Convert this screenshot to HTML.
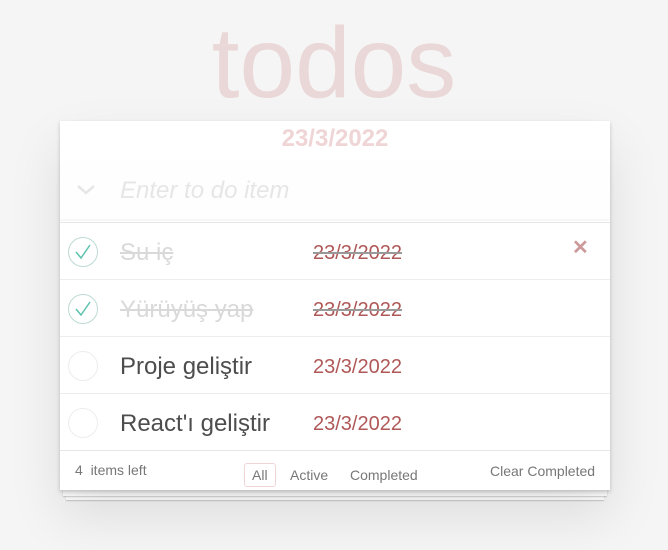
<!DOCTYPE html>
<html><head><meta charset="utf-8"><style>
*{margin:0;padding:0;box-sizing:border-box}
body{width:668px;height:550px;background:#f5f5f5;font-family:"Liberation Sans",Helvetica,Arial,sans-serif;position:relative;overflow:hidden;color:#4d4d4d}
h1{position:absolute;top:8px;left:0;width:668px;text-align:center;font-size:100px;font-weight:100;color:rgba(175,47,47,0.15);line-height:110px}
.card{position:absolute;left:60px;top:121px;width:550px;height:369px;background:#fff;box-shadow:0 2px 4px rgba(0,0,0,.2),0 25px 50px rgba(0,0,0,.1)}
.s1{position:absolute;left:63px;top:488px;width:544px;height:8px;background:#fff;box-shadow:0 1px 1px rgba(0,0,0,.2)}
.s2{position:absolute;left:66px;top:492px;width:538px;height:8px;background:#fff;box-shadow:0 1px 1px rgba(0,0,0,.2)}
.hd{position:absolute;left:0;top:4px;width:550px;text-align:center;font-size:24px;font-weight:bold;color:#efd5d5}
.inp{position:absolute;left:0;top:40px;width:550px;height:60px;background:rgba(0,0,0,0.003);box-shadow:inset 0 -2px 1px rgba(0,0,0,.03)}
.inp span{position:absolute;left:60px;top:16px;font-size:24px;font-style:italic;color:#e6e6e6}
.chev{position:absolute;left:16px;top:63px}
.row{position:absolute;left:0;width:550px;height:57px;border-top:1px solid #ededed}
.row .c{position:absolute;left:8px;top:14px;width:30px;height:30px;border:1px solid #ededed;border-radius:50%}
.row .c.d{border-color:#bddad5}
.row .t{position:absolute;left:60px;top:16px;font-size:24px;color:#4d4d4d}
.row .t.d{color:#d9d9d9;text-decoration:line-through}
.row .dt{position:absolute;left:253px;top:19px;font-size:20px;color:#b05858}
.row .dt.d{text-decoration:line-through;text-decoration-color:#999}
.x{position:absolute;left:512px;top:12px;font-size:20px;font-weight:bold;color:#cc9a9a}
.ft{position:absolute;left:0;top:329px;width:550px;height:40px;border-top:1px solid #e6e6e6;font-size:14px;color:#777}
</style></head><body>
<h1>todos</h1>
<div class="s2"></div><div class="s1"></div>
<div class="card">
<div class="hd">23/3/2022</div>
<div class="inp"><span>Enter to do item</span></div>
<svg class="chev" width="20" height="12" viewBox="0 0 20 12"><path d="M2 2 L10 9 L18 2" fill="none" stroke="#e6e6e6" stroke-width="2.5"/></svg>
<div class="row" style="top:101px;border-top:1px solid #e6e6e6">
<div class="c d"><svg width="30" height="30" viewBox="0 0 30 30" style="position:absolute;left:-1px;top:-1px"><path d="M8 15 L13 21 L22 8" fill="none" stroke="#5dc2af" stroke-width="1.5"/></svg></div>
<div class="t d">Su iç</div><div class="dt d">23/3/2022</div><div class="x">✕</div></div>
<div class="row" style="top:158px">
<div class="c d"><svg width="30" height="30" viewBox="0 0 30 30" style="position:absolute;left:-1px;top:-1px"><path d="M8 15 L13 21 L22 8" fill="none" stroke="#5dc2af" stroke-width="1.5"/></svg></div>
<div class="t d">Yürüyüş yap</div><div class="dt d">23/3/2022</div></div>
<div class="row" style="top:215px"><div class="c"></div><div class="t">Proje geliştir</div><div class="dt">23/3/2022</div></div>
<div class="row" style="top:272px"><div class="c"></div><div class="t">React'ı geliştir</div><div class="dt">23/3/2022</div></div>
<div class="ft">
<span style="position:absolute;left:15px;top:11px;font-size:14px">4 &nbsp;items left</span>
<span style="position:absolute;left:184px;top:12px;border:1px solid rgba(175,47,47,.2);border-radius:3px;padding:3px 7px">All</span>
<span style="position:absolute;left:230px;top:16px">Active</span>
<span style="position:absolute;left:290px;top:16px">Completed</span>
<span style="position:absolute;left:430px;top:12px">Clear Completed</span>
</div>
</div>
</body></html>
